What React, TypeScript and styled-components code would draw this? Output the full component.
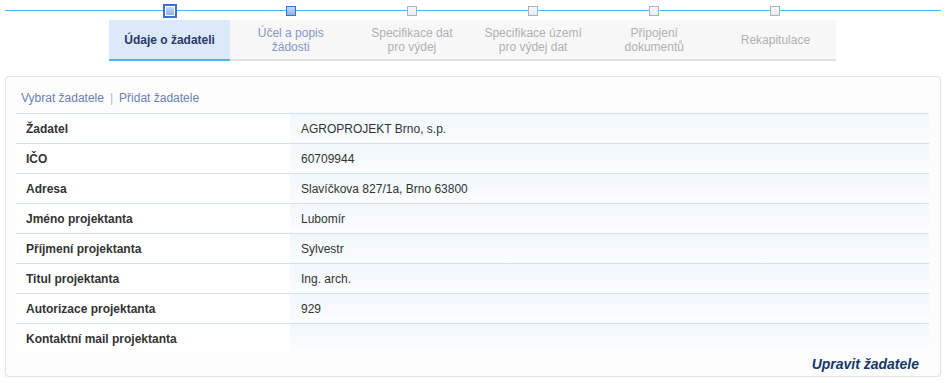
import React from 'react'
import styled, { createGlobalStyle } from 'styled-components'

const GlobalStyle = createGlobalStyle`
  html, body {
    margin: 0;
    padding: 0;
    background: #fff;
    font-family: 'Liberation Sans', Arial, sans-serif;
    font-size: 12px;
    color: #333;
  }
`

const Page = styled.div`
  width: 947px;
  padding: 4px 6px 0 5px;
  box-sizing: border-box;
`

const Stepper = styled.div`
  position: relative;
  height: 14px;
  margin-bottom: 2px;
  display: flex;
  justify-content: center;
  padding-left: 104px;
  padding-right: 105px;
  box-sizing: border-box;

  &::before {
    content: '';
    position: absolute;
    left: 0;
    right: 0;
    top: 6px;
    height: 1px;
    background: #3dbdf0;
  }
`

const StepSlot = styled.div`
  flex: 1;
  display: flex;
  justify-content: center;
  align-items: center;
  position: relative;
`

const Dot = styled.div<{ $state: 'active' | 'done' | 'todo' }>`
  box-sizing: border-box;
  background: ${({ $state }) =>
    $state === 'todo'
      ? 'linear-gradient(#f6f7f9, #e9ecf0)'
      : $state === 'active'
        ? 'linear-gradient(#c6d9f3, #8fb1e6) content-box, #fff'
        : 'linear-gradient(#c6d9f3, #8fb1e6)'};
  border: ${({ $state }) => ($state === 'active' ? '2px' : '1px')} solid
    ${({ $state }) => ($state === 'todo' ? '#aab2bc' : '#3b6fd6')};
  width: ${({ $state }) => ($state === 'active' ? '14px' : '10px')};
  height: ${({ $state }) => ($state === 'active' ? '14px' : '10px')};
  padding: ${({ $state }) => ($state === 'active' ? '1px' : '0')};
  position: relative;
  z-index: 1;
`

const Tabs = styled.div`
  display: flex;
  margin: 0 105px 0 104px;
`

const Tab = styled.div<{ $state: 'active' | 'done' | 'todo' }>`
  flex: 1;
  height: 41px;
  display: flex;
  align-items: center;
  justify-content: center;
  text-align: center;
  line-height: 14px;
  font-size: 12px;
  box-sizing: border-box;
  background: ${({ $state }) => ($state === 'active' ? '#dbe9f8' : '#f7f7f7')};
  border-bottom: 2px solid ${({ $state }) => ($state === 'active' ? '#48b7ea' : '#e2e2e2')};
  color: ${({ $state }) => ($state === 'active' ? '#283a6e' : $state === 'done' ? '#8696c8' : '#b1b1b1')};
  font-weight: ${({ $state }) => ($state === 'active' ? 'bold' : 'normal')};
`

const Panel = styled.div`
  margin-top: 15px;
  border: 1px solid #e3e3e3;
  border-radius: 4px;
  background: #fcfcfc;
  box-shadow: 0 1px 2px rgba(0, 0, 0, 0.06);
  padding: 14px 11px 4px 10px;
`

const LinkBar = styled.div`
  padding-left: 5px;
  height: 22px;
  line-height: 14px;
  color: #6b80b3;
`

const Sep = styled.span`
  color: #aab8d8;
  margin: 0 6px;
`

const Table = styled.div`
  border-top: 1px solid #d3dfeb;
`

const Row = styled.div<{ $last?: boolean }>`
  display: grid;
  grid-template-columns: 274px 1fr;
  height: 29px;
  border-bottom: 1px solid ${({ $last }) => ($last ? 'transparent' : '#d3dfeb')};
`

const Label = styled.div`
  background: #fff;
  font-weight: bold;
  color: #333;
  padding-left: 10px;
  display: flex;
  align-items: center;
`

const Value = styled.div`
  background: linear-gradient(#f1f7fc, #fbfdff);
  color: #333;
  padding-left: 11px;
  display: flex;
  align-items: center;
`

const Footer = styled.div`
  display: flex;
  justify-content: flex-end;
  padding: 2px 10px 0 0;
`

const EditLink = styled.span`
  font-weight: bold;
  font-style: italic;
  font-size: 14px;
  color: #14386a;
`

type StepState = 'active' | 'done' | 'todo'

const steps: { label: React.ReactNode; state: StepState }[] = [
  { label: 'Údaje o žadateli', state: 'active' },
  { label: <>Účel a popis<br />žádosti</>, state: 'done' },
  { label: <>Specifikace dat<br />pro výdej</>, state: 'todo' },
  { label: <>Specifikace území<br />pro výdej dat</>, state: 'todo' },
  { label: <>Připojení<br />dokumentů</>, state: 'todo' },
  { label: 'Rekapitulace', state: 'todo' }
]

const rows: [string, string][] = [
  ['Žadatel', 'AGROPROJEKT Brno, s.p.'],
  ['IČO', '60709944'],
  ['Adresa', 'Slavíčkova 827/1a, Brno 63800'],
  ['Jméno projektanta', 'Lubomír'],
  ['Příjmení projektanta', 'Sylvestr'],
  ['Titul projektanta', 'Ing. arch.'],
  ['Autorizace projektanta', '929'],
  ['Kontaktní mail projektanta', '']
]

export default function App() {
  return (
    <Page>
      <GlobalStyle />
      <Stepper>
        {steps.map((s, i) => (
          <StepSlot key={i}>
            <Dot $state={s.state} />
          </StepSlot>
        ))}
      </Stepper>
      <Tabs>
        {steps.map((s, i) => (
          <Tab key={i} $state={s.state}>
            <span>{s.label}</span>
          </Tab>
        ))}
      </Tabs>
      <Panel>
        <LinkBar>
          Vybrat žadatele<Sep>|</Sep>Přidat žadatele
        </LinkBar>
        <Table>
          {rows.map(([k, v], i) => (
            <Row key={k} $last={i === rows.length - 1}>
              <Label>{k}</Label>
              <Value>{v}</Value>
            </Row>
          ))}
        </Table>
        <Footer>
          <EditLink>Upravit žadatele</EditLink>
        </Footer>
      </Panel>
    </Page>
  )
}
